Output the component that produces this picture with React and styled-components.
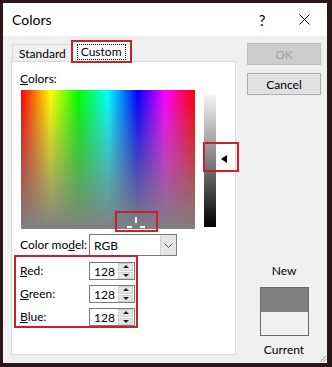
import React from 'react'
import styled, { createGlobalStyle } from 'styled-components'

const Global = createGlobalStyle`
  html, body { margin: 0; padding: 0; background: #2b1619; }
  body { font-family: Lato, "Noto Sans", sans-serif; font-size: 12px; color: #000; }
  * { box-sizing: border-box; }
`

const RED = '#c9202f'

const Frame = styled.div`
  position: relative;
  width: 332px;
  height: 367px;
  border-style: solid;
  border-color: #2b1619;
  border-width: 3px 5px 4px 3px;
  background: #f0f0f0;
  display: flex;
  flex-direction: column;
`

const TitleBar = styled.div`
  height: 33px;
  background: #fff;
  display: flex;
  align-items: center;
  padding-left: 9px;
`

const Title = styled.div`
  flex: 1;
  font-size: 14px;
`

const Help = styled.div`
  width: 20px;
  font-size: 15px;
  text-align: center;
  margin-right: 9px;
`

const Close = styled.div`
  width: 46px;
  height: 33px;
  display: flex;
  align-items: center;
  justify-content: center;
`

const Body = styled.div`
  flex: 1;
  display: flex;
  gap: 11px;
  padding: 6px 0 0 8px;
`

const Left = styled.div`
  width: 225px;
  display: flex;
  flex-direction: column;
`

const TabStrip = styled.div`
  display: flex;
  align-items: flex-end;
  height: 20px;
  padding-left: 1px;
  position: relative;
  z-index: 1;
  margin-bottom: -1px;
`

const Tab = styled.div`
  position: relative;
  height: ${(p) => (p.active ? '22px' : '18px')};
  padding: 0 ${(p) => (p.active ? '4px' : '6px')};
  background: ${(p) => (p.active ? '#fff' : '#f0f0f0')};
  border: 1px solid #d9d9d9;
  border-bottom: ${(p) => (p.active ? 'none' : '1px solid #d9d9d9')};
  margin-left: ${(p) => (p.active ? '-1px' : '0')};
  display: flex;
  align-items: center;
  white-space: nowrap;
`

const FocusText = styled.span`
  border: 1px dotted #000;
  padding: 0 3px;
  line-height: 14px;
`

const Outline = styled.div`
  position: absolute;
  border: 2px solid ${RED};
  pointer-events: none;
`

const Panel = styled.div`
  flex: 1;
  background: #fff;
  border: 1px solid #d9d9d9;
  margin-bottom: 8px;
  padding: 9px 0 0 8px;
  display: flex;
  flex-direction: column;
`

const Label = styled.div`
  line-height: 16px;
  white-space: nowrap;
  width: ${(p) => p.width || 'auto'};
  u { text-decoration: underline; }
`

const SpectrumRow = styled.div`
  display: flex;
  gap: 9px;
  align-items: flex-start;
  margin-top: 3px;
  margin-left: 1px;
`

const Spectrum = styled.div`
  position: relative;
  width: 174px;
  height: 139px;
  background:
    linear-gradient(to bottom, rgba(128,128,128,0) 0%, rgba(128,128,128,1) 100%),
    linear-gradient(to right, #ff0000 0%, #ffff00 17%, #00ff00 33%, #00ffff 50%, #0000ff 67%, #ff00ff 83%, #ff0000 100%);
`

const Cross = styled.div`
  position: absolute;
  background: #fff;
`

const Lum = styled.div`
  position: relative;
  width: 12px;
  height: 132px;
  margin-top: 5px;
  background: linear-gradient(to bottom, #f4f4f4 0%, #808080 50%, #000 100%);
`

const Arrow = styled.div`
  position: absolute;
  left: 17px;
  top: 60px;
  width: 0;
  height: 0;
  border-top: 4px solid transparent;
  border-bottom: 4px solid transparent;
  border-right: 6px solid #000;
`

const ModelRow = styled.div`
  display: flex;
  align-items: center;
  margin-top: 5px;
`

const Select = styled.div`
  width: 88px;
  height: 22px;
  border: 1px solid #7a7a7a;
  display: flex;
  align-items: center;
  padding-left: 4px;
`

const SelectText = styled.span`
  flex: 1;
`

const DropBtn = styled.div`
  width: 16px;
  height: 20px;
  background: #e5e5e5;
  border-left: 1px solid #d0d0d0;
  display: flex;
  align-items: center;
  justify-content: center;
`

const RgbGroup = styled.div`
  position: relative;
  display: flex;
  flex-direction: column;
  gap: 5px;
  margin-top: 6px;
`

const RgbRow = styled.div`
  display: flex;
  align-items: center;
  height: 18px;
`

const Spin = styled.div`
  width: 46px;
  height: 18px;
  border: 1px solid #7a7a7a;
  display: flex;
  align-items: center;
  padding-left: 4px;
  background: #fff;
`

const SpinText = styled.span`
  flex: 1;
`

const SpinBtns = styled.div`
  width: 15px;
  height: 16px;
  display: flex;
  flex-direction: column;
  gap: 1px;
  margin-right: 1px;
`

const SpinBtn = styled.div`
  flex: 1;
  background: #e5e5e5;
  border: 1px solid #cfcfcf;
  display: flex;
  align-items: center;
  justify-content: center;
`

const Tri = styled.div`
  width: 0;
  height: 0;
  border-left: 3px solid transparent;
  border-right: 3px solid transparent;
  border-${(p) => (p.up ? 'bottom' : 'top')}: 3px solid #222;
`

const Right = styled.div`
  width: 74px;
  display: flex;
  flex-direction: column;
  align-items: center;
  padding-top: 1px;
  padding-bottom: 6px;
`

const Button = styled.div`
  width: 74px;
  height: 22px;
  border: 1px solid ${(p) => (p.disabled ? '#bfbfbf' : '#adadad')};
  background: ${(p) => (p.disabled ? '#cccccc' : '#e1e1e1')};
  color: ${(p) => (p.disabled ? '#a0a0a0' : '#000')};
  display: flex;
  align-items: center;
  justify-content: center;
  margin-bottom: 8px;
`

const Spacer = styled.div`
  flex: 1;
`

const Swatch = styled.div`
  width: 49px;
  height: 49px;
  border: 1px solid #6a6a6a;
  display: flex;
  flex-direction: column;
  margin: 9px 0 6px;
`

const SwatchHalf = styled.div`
  flex: 1;
  background: ${(p) => p.color};
`

const Grip = styled.svg`
  position: absolute;
  right: 0;
  bottom: 0;
`

const Spinner = ({ value }) => (
  <Spin>
    <SpinText>{value}</SpinText>
    <SpinBtns>
      <SpinBtn><Tri up /></SpinBtn>
      <SpinBtn><Tri /></SpinBtn>
    </SpinBtns>
  </Spin>
)

export default function App() {
  return (
    <>
      <Global />
      <Frame>
        <TitleBar>
          <Title>Colors</Title>
          <Help>?</Help>
          <Close>
            <svg width="11" height="11" viewBox="0 0 11 11">
              <path d="M0.5 0.5 L10.5 10.5 M10.5 0.5 L0.5 10.5" stroke="#000" strokeWidth="1" />
            </svg>
          </Close>
        </TitleBar>
        <Body>
          <Left>
            <TabStrip>
              <Tab>Standard</Tab>
              <Tab active>
                <FocusText>Custom</FocusText>
                <Outline style={{ left: -2, top: -1, right: -2, bottom: -1 }} />
              </Tab>
            </TabStrip>
            <Panel>
              <Label><u>C</u>olors:</Label>
              <SpectrumRow>
                <Spectrum>
                  <Cross style={{ left: 114, top: 127, width: 2, height: 6 }} />
                  <Cross style={{ left: 106, top: 136, width: 5, height: 2 }} />
                  <Cross style={{ left: 119, top: 136, width: 5, height: 2 }} />
                  <Outline style={{ left: 94, top: 121, width: 43, height: 21 }} />
                </Spectrum>
                <Lum>
                  <Arrow />
                  <Outline style={{ left: -1, top: 47, width: 36, height: 30 }} />
                </Lum>
              </SpectrumRow>
              <ModelRow>
                <Label width="69px">Color mo<u>d</u>el:</Label>
                <Select>
                  <SelectText>RGB</SelectText>
                  <DropBtn>
                    <svg width="9" height="5" viewBox="0 0 9 5">
                      <path d="M0.5 0.5 L4.5 4.5 L8.5 0.5" stroke="#555" fill="none" />
                    </svg>
                  </DropBtn>
                </Select>
              </ModelRow>
              <RgbGroup>
                <RgbRow>
                  <Label width="69px"><u>R</u>ed:</Label>
                  <Spinner value="128" />
                </RgbRow>
                <RgbRow>
                  <Label width="69px"><u>G</u>reen:</Label>
                  <Spinner value="128" />
                </RgbRow>
                <RgbRow>
                  <Label width="69px"><u>B</u>lue:</Label>
                  <Spinner value="128" />
                </RgbRow>
                <Outline style={{ left: -6, top: -7, width: 124, height: 73 }} />
              </RgbGroup>
            </Panel>
          </Left>
          <Right>
            <Button disabled>OK</Button>
            <Button>Cancel</Button>
            <Spacer />
            <div>New</div>
            <Swatch>
              <SwatchHalf color="#808080" />
              <SwatchHalf color="#f0f0f0" />
            </Swatch>
            <div>Current</div>
          </Right>
        </Body>
        <Grip width="8" height="8" viewBox="0 0 8 8">
          <path d="M7 1 L1 7 M7 4 L4 7" stroke="#a0a0a0" strokeWidth="1" />
        </Grip>
      </Frame>
    </>
  )
}
